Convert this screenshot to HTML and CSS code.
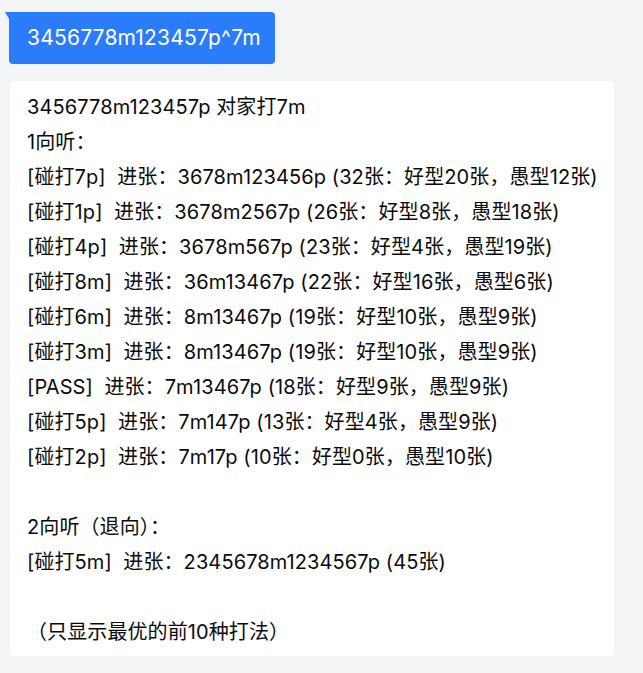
FILE: index.html
```html
<!DOCTYPE html>
<html lang="zh-CN">
<head>
<meta charset="utf-8">
<title>打法分析</title>
<link rel="stylesheet" href="styles.css">
</head>
<body>
<div class="chat">
  <div class="bubble">3456778m123457p^7m</div>
  <div class="card"><div class="line">3456778m123457p 对家打7m</div><div class="line">1向听：</div><div class="line">[碰打7p]  进张：3678m123456p (32张：好型20张，愚型12张)</div><div class="line">[碰打1p]  进张：3678m2567p (26张：好型8张，愚型18张)</div><div class="line">[碰打4p]  进张：3678m567p (23张：好型4张，愚型19张)</div><div class="line">[碰打8m]  进张：36m13467p (22张：好型16张，愚型6张)</div><div class="line">[碰打6m]  进张：8m13467p (19张：好型10张，愚型9张)</div><div class="line">[碰打3m]  进张：8m13467p (19张：好型10张，愚型9张)</div><div class="line">[PASS]  进张：7m13467p (18张：好型9张，愚型9张)</div><div class="line">[碰打5p]  进张：7m147p (13张：好型4张，愚型9张)</div><div class="line">[碰打2p]  进张：7m17p (10张：好型0张，愚型10张)</div><div class="line">&nbsp;</div><div class="line">2向听（退向）：</div><div class="line">[碰打5m]  进张：2345678m1234567p (45张)</div><div class="line">&nbsp;</div><div class="line">（只显示最优的前10种打法）</div></div>
</div>
</body>
</html>
```
FILE: styles.css
```css
html, body {
  margin: 0;
  padding: 0;
  background: #f3f4f6;
}
body {
  font-family: "Inter", "Noto Sans CJK SC", sans-serif;
  font-size: 20px;
  line-height: 35px;
  color: #0a0a0a;
}
.chat {
  display: flex;
  flex-direction: column;
  align-items: flex-start;
  padding: 12px 0 0 9px;
}
.bubble {
  position: relative;
  background: #2a7cfa;
  color: #fff;
  font-size: 21px;
  letter-spacing: 0.2px;
  padding: 8px 14px 9px 18px;
  border-radius: 0 4px 4px 4px;
}
.bubble::before {
  content: "";
  position: absolute;
  left: -4px;
  top: 0;
  border-top: 7px solid #2a7cfa;
  border-left: 4px solid transparent;
}
.card {
  margin: 17px 0 0 1px;
  width: 604px;
  box-sizing: border-box;
  background: #fff;
  border-radius: 4px;
  padding: 9px 17px 6px 17px;
  letter-spacing: 0.1px;
}
.line {
  white-space: pre;
}
```
